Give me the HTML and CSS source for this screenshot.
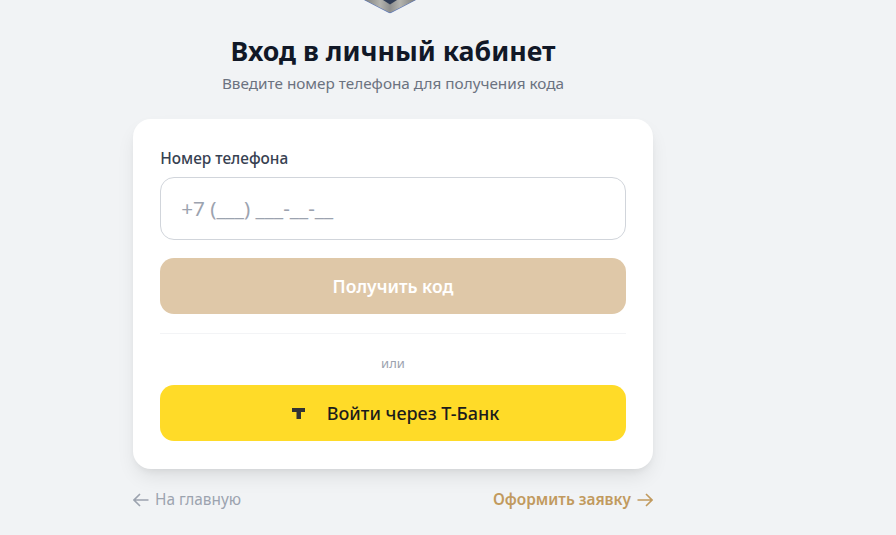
FILE: index.html
```html
<!DOCTYPE html>
<html lang="ru">
<head>
    <meta charset="UTF-8">
    <meta name="viewport" content="width=device-width, initial-scale=1.0">
    <title>Вход в личный кабинет</title>
    <link rel="stylesheet" href="styles.css">
</head>
<body>
    <main class="login">
        <div class="logo">
            <svg width="54" height="14" viewBox="0 0 54 14">
                <defs>
                    <linearGradient id="shield" x1="0" y1="0" x2="1" y2="0">
                        <stop offset="0" stop-color="#7f807f"/>
                        <stop offset=".3" stop-color="#b4b4af"/>
                        <stop offset=".5" stop-color="#8e8f8e"/>
                        <stop offset=".7" stop-color="#b4b4af"/>
                        <stop offset="1" stop-color="#7f807f"/>
                    </linearGradient>
                </defs>
                <path d="M1 0 25.500 12.700Q27 13.600 28.500 12.700L53 0z" fill="#5a76ba"/>
                <path d="M2 0 26 12.300Q27 12.800 28 12.300L52 0z" fill="url(#shield)"/>
                <path d="M20 0 27 4.500 34 0z" fill="#2f3c55"/>
            </svg>
        </div>

        <h1 class="title">Вход в личный кабинет</h1>
        <p class="subtitle">Введите номер телефона для получения кода</p>

        <form class="card">
            <label class="field-label" for="phone">Номер телефона</label>
            <input class="phone-input" id="phone" type="tel" placeholder="+7 (___) ___-__-__">
            <button class="btn btn-code" type="button">Получить код</button>
            <div class="divider"></div>
            <div class="or">или</div>
            <button class="btn btn-tbank" type="button">
                <svg class="tbank-icon" width="13" height="11" viewBox="0 0 13 11">
                    <path d="M0 0h13v4H9v7H4.500V4H0z" fill="#333"/>
                </svg>
                Войти через Т-Банк
            </button>
        </form>

        <div class="links">
            <a class="link link-home" href="#">
                <svg width="16" height="14" viewBox="0 0 16 14" fill="none" stroke="currentColor" stroke-width="1.600">
                    <path d="M15.500 7H1M7 1 1 7l6 6"/>
                </svg>
                На главную
            </a>
            <a class="link link-apply" href="#">
                Оформить заявку
                <svg width="16" height="14" viewBox="0 0 16 14" fill="none" stroke="currentColor" stroke-width="1.600">
                    <path d="M.5 7H15M9 1l6 6-6 6"/>
                </svg>
            </a>
        </div>
    </main>
</body>
</html>
```

FILE: styles.css
```css
* { box-sizing: border-box; }

html, body { height: 100%; overflow: hidden; }

body {
    margin: 0;
    background: #f1f3f5;
    font-family: "Noto Sans", Inter, sans-serif;
    color: #111827;
}

.login {
    width: 520px;
    margin-left: 133px;
}

.logo {
    display: flex;
    justify-content: center;
    height: 14px;
    padding-right: 6px;
}

.title {
    margin: 21px 0 0;
    font-size: 26.700px;
    line-height: 32px;
    font-weight: 700;
    text-align: center;
}

.subtitle {
    margin: 6px 0 0;
    font-size: 15.300px;
    line-height: 20px;
    color: #6b7280;
    text-align: center;
}

.card {
    margin-top: 26px;
    padding: 29px 27.200px 28px;
    height: 350px;
    background: #fff;
    border-radius: 18px;
    box-shadow: 0 10px 20px -3px rgba(0, 0, 0, .09), 0 4px 8px -4px rgba(0, 0, 0, .09);
}

.field-label {
    display: block;
    margin-bottom: 7px;
    font-size: 15.400px;
    line-height: 22px;
    font-weight: 500;
    color: #374151;
}

.phone-input {
    display: block;
    width: 100%;
    height: 62.500px;
    padding: 0 20px;
    border: 1.500px solid #d1d5db;
    border-radius: 14px;
    font-family: inherit;
    font-size: 20.700px;
    color: #111827;
    outline: none;
}

.phone-input::placeholder { color: #9ca3af; opacity: 1; }

.btn {
    display: flex;
    align-items: center;
    justify-content: center;
    width: 100%;
    height: 56px;
    border: 0;
    border-radius: 14px;
    font-family: inherit;
    font-size: 17.500px;
    font-weight: 600;
}

.btn-code {
    margin-top: 18.500px;
    background: #dfc8a8;
    color: #fff;
}

.divider {
    margin-top: 19px;
    height: 1px;
    background: #f3f4f6;
}

.or {
    margin-top: 20px;
    font-size: 13px;
    line-height: 18px;
    color: #9ca3af;
    text-align: center;
}

.btn-tbank {
    margin-top: 13px;
    padding-left: 11px;
    gap: 22px;
    background: #ffdb28;
    color: #1c1c1c;
    font-size: 18px;
    font-weight: 500;
}

.links {
    display: flex;
    justify-content: space-between;
    margin-top: 21px;
}

.link {
    display: flex;
    align-items: center;
    gap: 6px;
    font-size: 15.400px;
    line-height: 20px;
    text-decoration: none;
}

.link-home { color: #9ca3af; }

.link-apply {
    color: #c19a5e;
    font-weight: 600;
}
```
